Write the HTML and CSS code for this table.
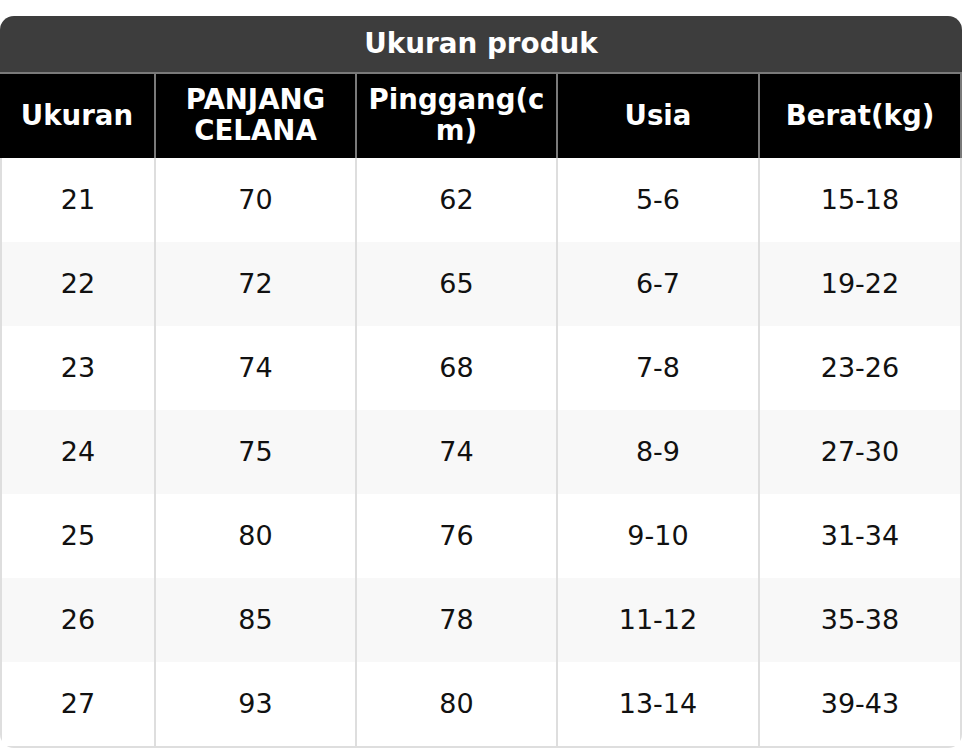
FILE: index.html
```html
<!DOCTYPE html>
<html>
<head>
<meta charset="utf-8">
<link rel="stylesheet" href="styles.css">
</head>
<body>
<div class="card">
  <div class="title">Ukuran produk</div>
  <table class="size-table">
    <colgroup>
      <col class="c1"><col class="c2"><col class="c3"><col class="c4"><col class="c5">
    </colgroup>
    <thead>
      <tr><th>Ukuran</th><th>PANJANG CELANA</th><th>Pinggang(cm)</th><th>Usia</th><th>Berat(kg)</th></tr>
    </thead>
    <tbody>
      <tr><td>21</td><td>70</td><td>62</td><td>5-6</td><td>15-18</td></tr>
      <tr><td>22</td><td>72</td><td>65</td><td>6-7</td><td>19-22</td></tr>
      <tr><td>23</td><td>74</td><td>68</td><td>7-8</td><td>23-26</td></tr>
      <tr><td>24</td><td>75</td><td>74</td><td>8-9</td><td>27-30</td></tr>
      <tr><td>25</td><td>80</td><td>76</td><td>9-10</td><td>31-34</td></tr>
      <tr><td>26</td><td>85</td><td>78</td><td>11-12</td><td>35-38</td></tr>
      <tr><td>27</td><td>93</td><td>80</td><td>13-14</td><td>39-43</td></tr>
    </tbody>
  </table>
</div>
</body>
</html>
```
FILE: styles.css
```css
html, body {
  margin: 0;
  padding: 0;
  background: #ffffff;
}
body {
  padding-top: 16px;
  font-family: "DejaVu Sans", Verdana, sans-serif;
}
.card {
  width: 962px;
  border-radius: 14px;
  overflow: hidden;
  background: #fff;
}
.title {
  background: #3d3d3d;
  color: #fff;
  font-weight: bold;
  font-size: 27.8px;
  height: 56px;
  line-height: 56px;
  text-align: center;
  border-bottom: 2px solid #7a7a7a;
}
.size-table {
  width: 100%;
  table-layout: fixed;
  border-collapse: separate;
  border-spacing: 0;
}
.c1 { width: 154px; }
.c2 { width: 201px; }
.c3 { width: 201px; }
.c4 { width: 202px; }
.c5 { width: 204px; }
.size-table th {
  background: #000;
  color: #fff;
  font-weight: bold;
  font-size: 27.6px;
  line-height: 31px;
  padding: 10px 10px 12px;
  text-align: center;
  overflow-wrap: anywhere;
  border-left: 2px solid #7a7a7a;
}
.size-table th:first-child {
  border-left: none;
}
.size-table th:last-child {
  border-right: 2px solid #7a7a7a;
}
.size-table td {
  font-size: 27px;
  line-height: 32px;
  padding: 26px 8px;
  text-align: center;
  color: #111;
  border-left: 2px solid #dedede;
}
.size-table td:last-child {
  border-right: 2px solid #dedede;
}
.size-table tbody tr:nth-child(even) td {
  background: #f8f8f8;
}
.size-table tbody tr:last-child td {
  border-bottom: 2px solid #dedede;
}
```
